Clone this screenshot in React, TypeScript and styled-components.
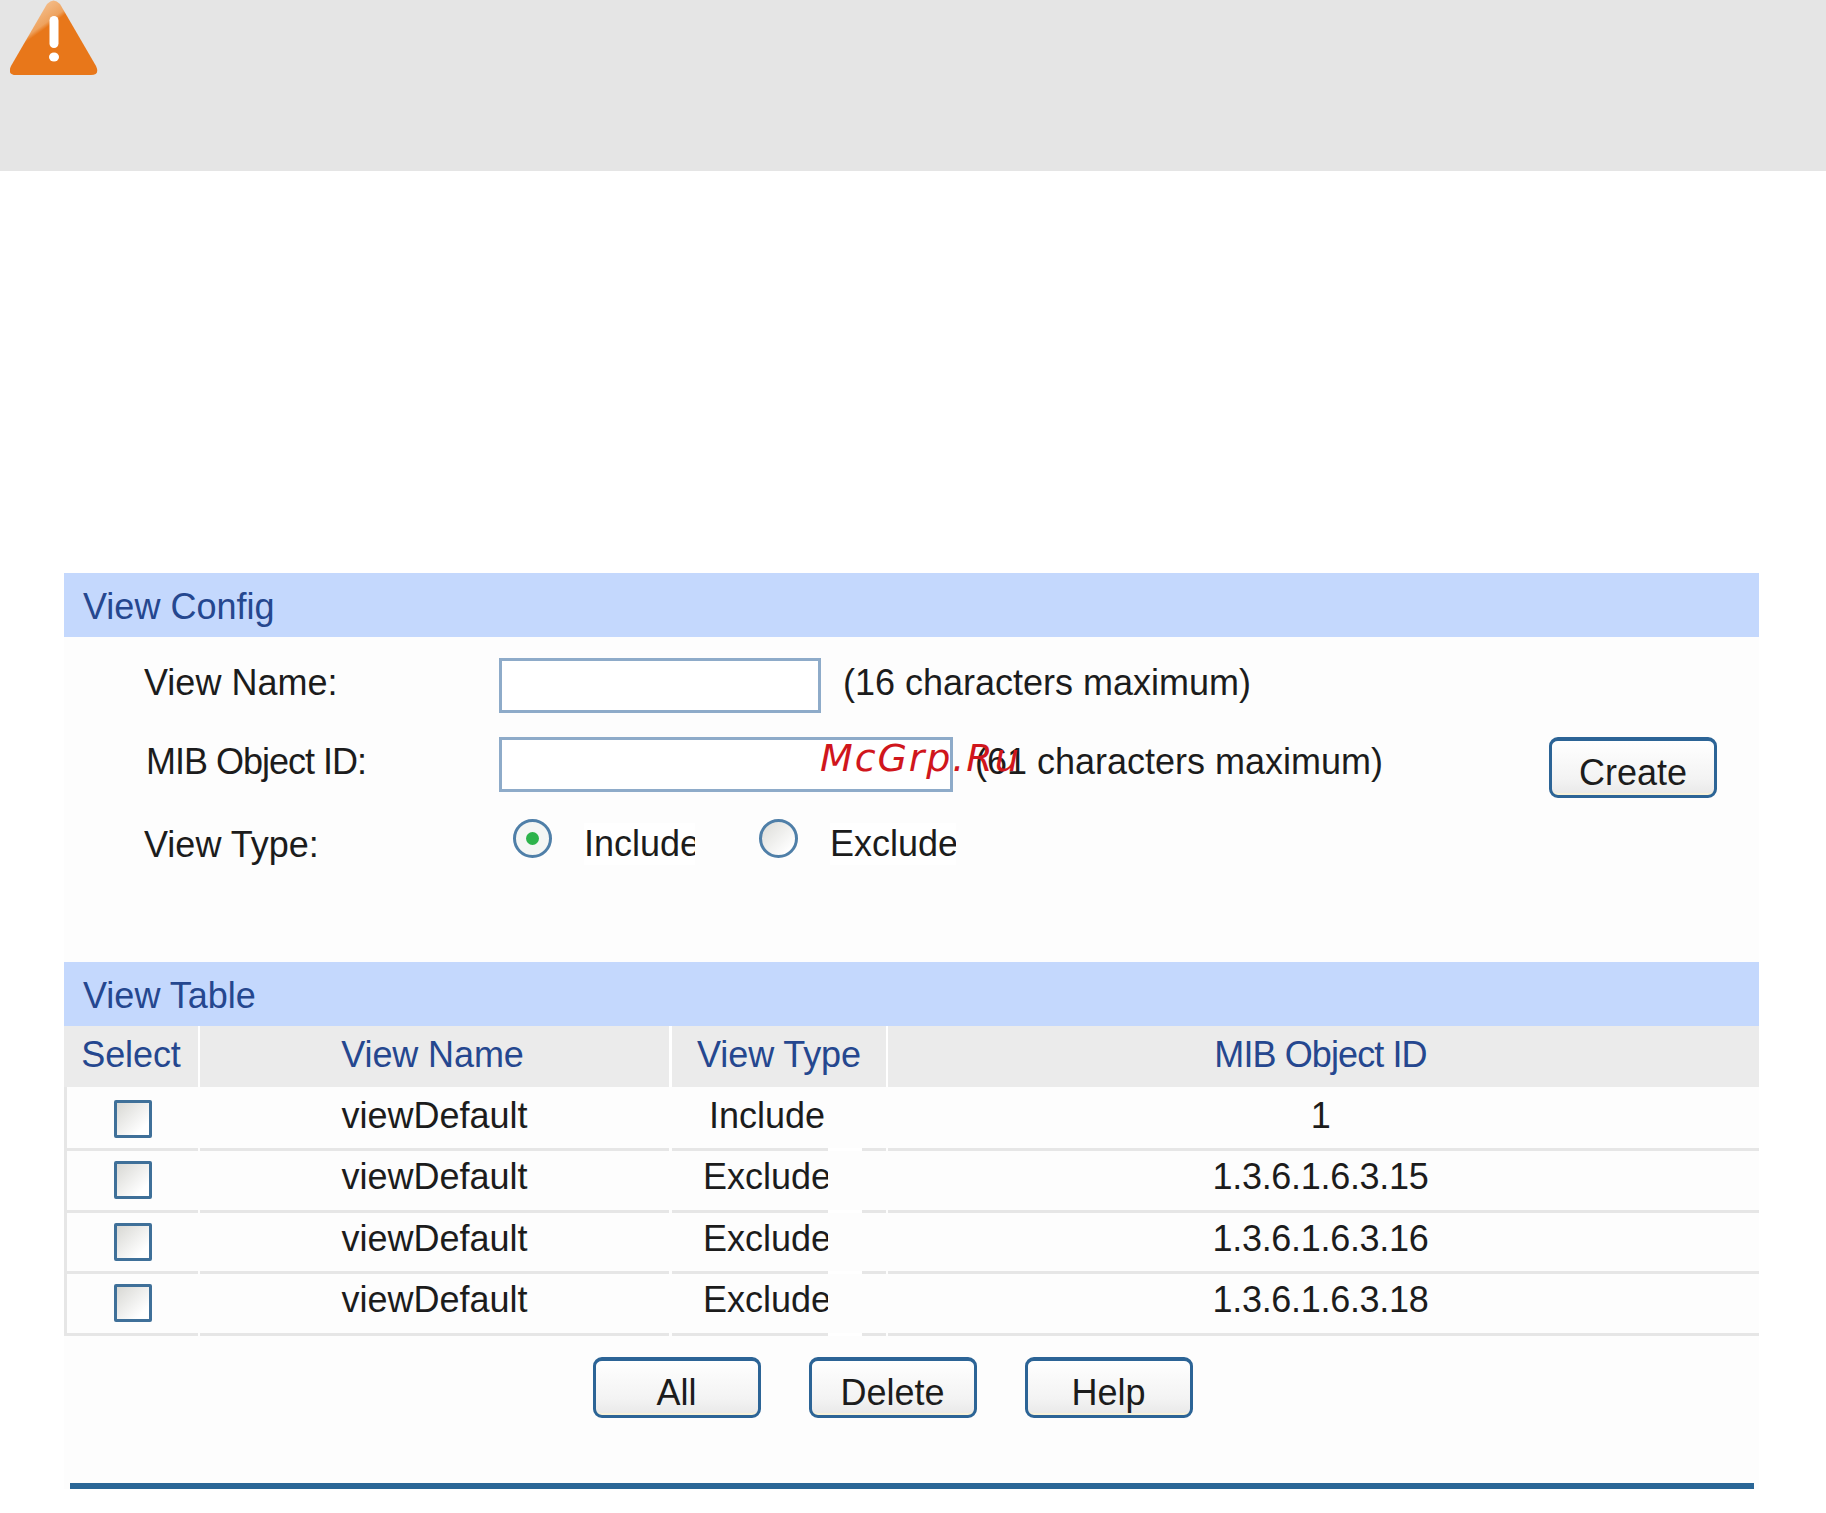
import React from "react";
import styled, { createGlobalStyle } from "styled-components";

const GlobalStyle = createGlobalStyle`
  html, body {
    margin: 0;
    padding: 0;
    background: #fff;
    font-family: "Liberation Sans", Arial, sans-serif;
    color: #1c1c1c;
  }
`;

const Page = styled.div`
  width: 1826px;
  height: 1513px;
  overflow: hidden;
`;

const Notice = styled.div`
  height: 171px;
  padding-left: 10px;
  background: #e5e5e5;
  box-sizing: border-box;
`;

const Panel = styled.div`
  position: relative;
  width: 1695px;
  margin: 402px 0 0 64px;
  font-size: 36px;
  line-height: 42px;
  background: #fdfdfd;
`;

const SectionTitle = styled.div`
  height: 64px;
  padding: 13px 0 0 19px;
  box-sizing: border-box;
  background: #c4d8fd;
  color: #25478f;
`;

const Form = styled.div`
  display: grid;
  grid-template-columns: 355px 1fr;
  padding: 21px 42px 0 80px;
  height: 325px;
  box-sizing: border-box;
  grid-template-rows: 55px 55px 39px;
  row-gap: 24px;
  align-items: start;
`;

const Label = styled.div<{ $drop?: number; $tight?: boolean }>`
  margin-top: ${({ $drop }) => $drop ?? 4}px;
  padding-left: ${({ $tight }) => ($tight ? 2 : 0)}px;
  letter-spacing: ${({ $tight }) => ($tight ? "-1px" : "0")};
  white-space: nowrap;
`;

const Value = styled.div`
  display: flex;
  align-items: flex-start;
`;

const TextInput = styled.div<{ $width: number }>`
  width: ${({ $width }) => $width}px;
  height: 55px;
  box-sizing: border-box;
  border: 3px solid #8eabc9;
  background: #fff;
`;

const Hint = styled.span`
  margin: 4px 0 0 22px;
  white-space: nowrap;
`;

const RadioGroup = styled.div`
  display: flex;
  align-items: flex-start;
  margin: 3px 0 0 14px;
`;

const Radio = styled.div<{ $checked?: boolean }>`
  flex: none;
  width: 39px;
  height: 39px;
  box-sizing: border-box;
  display: flex;
  align-items: center;
  justify-content: center;
  border: 3px solid #4f7fa8;
  border-radius: 50%;
  background: ${({ $checked }) =>
    $checked ? "#f4f6f4" : "linear-gradient(135deg, #dcdcd8 0%, #ffffff 85%)"};
  &::after {
    content: "";
    display: ${({ $checked }) => ($checked ? "block" : "none")};
    width: 13px;
    height: 13px;
    border-radius: 50%;
    background: #2cb34a;
  }
`;

const RadioText = styled.span<{ $width: number; $gap: number }>`
  display: block;
  width: ${({ $width }) => $width}px;
  margin: 4px ${({ $gap }) => $gap}px 0 32px;
  overflow: hidden;
  white-space: nowrap;
  background: #fff;
`;

const Table = styled.div`
  display: grid;
  grid-template-columns: 134px 2px 469px 3px 214px 2px 871px;
`;

const HeadCell = styled.div<{ $tight?: boolean; $shift?: number }>`
  height: 61px;
  padding: 8px ${({ $shift }) => $shift ?? 0}px 0 0;
  box-sizing: border-box;
  text-align: center;
  background: #ebebeb;
  color: #25478f;
  white-space: nowrap;
  letter-spacing: ${({ $tight }) => ($tight ? "-0.9px" : "-0.1px")};
`;

const HeadGap = styled.div`
  background: #fff;
`;

const Row = styled.div`
  display: contents;
`;

const Cell = styled.div<{ $first?: boolean; $tight?: boolean }>`
  height: ${({ $first }) => ($first ? 64 : 61.5)}px;
  display: flex;
  justify-content: center;
  box-sizing: border-box;
  padding-top: ${({ $first }) => ($first ? 8 : 5)}px;
  padding-right: ${({ $tight }) => ($tight ? 6 : 0)}px;
  border-bottom: 3px solid #e6e6e6;
  white-space: nowrap;
  letter-spacing: ${({ $tight }) => ($tight ? "-0.3px" : "0")};
`;

const SelectCell = styled(Cell)`
  padding-top: ${({ $first }) => ($first ? 13 : 10)}px;
  border-left: 3px solid #e6e6e6;
`;

const CellGap = styled(Cell)`
  padding: 0;
  border-bottom: none;
`;

const TypeCell = styled(Cell)`
  justify-content: flex-start;
  border-bottom: none;
  background: linear-gradient(to right, #e6e6e6 0 156px, #fff 156px 190px, #e6e6e6 190px) left
    bottom / 100% 3px no-repeat;
`;

const TypeClip = styled.div`
  width: 156px;
  overflow: hidden;
`;

const TypeText = styled.div`
  width: 190px;
  text-align: center;
`;

const Checkbox = styled.div`
  width: 38px;
  height: 38px;
  box-sizing: border-box;
  border: 3px solid #3f7099;
  border-radius: 2px;
  background: linear-gradient(135deg, #d8d8d4 0%, #ffffff 80%);
`;

const Actions = styled.div`
  display: flex;
  justify-content: center;
  gap: 48px;
  padding: 21px 38px 0 0;
`;

const Button = styled.div`
  flex: none;
  width: 168px;
  height: 61px;
  box-sizing: border-box;
  padding-top: 11px;
  border: 3px solid #2c6496;
  border-top-width: 4px;
  border-radius: 9px;
  text-align: center;
  background: linear-gradient(to bottom, #ffffff 0%, #f3f3f3 70%, #e8e8e8 100%);
  box-shadow: inset 0 -7px 0 -5px #f7f1d8;
`;

const CreateButton = styled(Button)`
  margin-left: auto;
`;

const BottomRule = styled.div`
  height: 6px;
  margin: 65px 5px 0 6px;
  background: #2a6696;
`;

const Watermark = styled.div`
  position: absolute;
  left: 756px;
  top: 164px;
  color: #d0161c;
  font-family: "DejaVu Sans", Verdana, sans-serif;
  font-style: italic;
  font-size: 38px;
  line-height: 42px;
  letter-spacing: 1.9px;
  white-space: nowrap;
`;

const AlertIcon = () => (
  <svg width="88" height="76" viewBox="0 0 88 76">
    <defs>
      <linearGradient id="shine" x1="0.1" y1="0" x2="0.6" y2="0.6">
        <stop offset="0" stopColor="#f9d9b8" />
        <stop offset="0.55" stopColor="#eea25e" />
        <stop offset="0.62" stopColor="#e8771a" />
      </linearGradient>
    </defs>
    <path d="M37 4 Q43.5 -3 50 4 L86 66 Q90 75 81 75 L6 75 Q-3 75 1 66 Z" fill="url(#shine)" />
    <rect x="39.5" y="16" width="9" height="32" rx="4.5" fill="#fff" />
    <ellipse cx="44" cy="57" rx="5" ry="4.5" fill="#fff" />
  </svg>
);

const rows = [
  { type: "Include", oid: "1" },
  { type: "Exclude", oid: "1.3.6.1.6.3.15" },
  { type: "Exclude", oid: "1.3.6.1.6.3.16" },
  { type: "Exclude", oid: "1.3.6.1.6.3.18" },
];

export default function App() {
  return (
    <Page>
      <GlobalStyle />
      <Notice>
        <AlertIcon />
      </Notice>
      <Panel>
        <SectionTitle>View Config</SectionTitle>
        <Form>
          <Label>View Name:</Label>
          <Value>
            <TextInput $width={322} />
            <Hint>(16 characters maximum)</Hint>
          </Value>
          <Label $tight>MIB Object ID:</Label>
          <Value>
            <TextInput $width={454} />
            <Hint>(61 characters maximum)</Hint>
            <CreateButton>Create</CreateButton>
          </Value>
          <Label $drop={8}>View Type:</Label>
          <RadioGroup>
            <Radio $checked />
            <RadioText $width={111} $gap={64}>
              Include
            </RadioText>
            <Radio />
            <RadioText $width={126} $gap={0}>
              Exclude
            </RadioText>
          </RadioGroup>
        </Form>
        <SectionTitle>View Table</SectionTitle>
        <Table>
          <HeadCell>Select</HeadCell>
          <HeadGap />
          <HeadCell $shift={4}>View Name</HeadCell>
          <HeadGap />
          <HeadCell>View Type</HeadCell>
          <HeadGap />
          <HeadCell $tight $shift={6}>
            MIB Object ID
          </HeadCell>
          {rows.map((row, i) => (
            <Row key={row.oid}>
              <SelectCell $first={i === 0}>
                <Checkbox />
              </SelectCell>
              <CellGap $first={i === 0} />
              <Cell $first={i === 0}>viewDefault</Cell>
              <CellGap $first={i === 0} />
              <TypeCell $first={i === 0}>
                <TypeClip>
                  <TypeText>{row.type}</TypeText>
                </TypeClip>
              </TypeCell>
              <CellGap $first={i === 0} />
              <Cell $first={i === 0} $tight>
                {row.oid}
              </Cell>
            </Row>
          ))}
        </Table>
        <Actions>
          <Button>All</Button>
          <Button>Delete</Button>
          <Button>Help</Button>
        </Actions>
        <BottomRule />
        <Watermark>McGrp.Ru</Watermark>
      </Panel>
    </Page>
  );
}
